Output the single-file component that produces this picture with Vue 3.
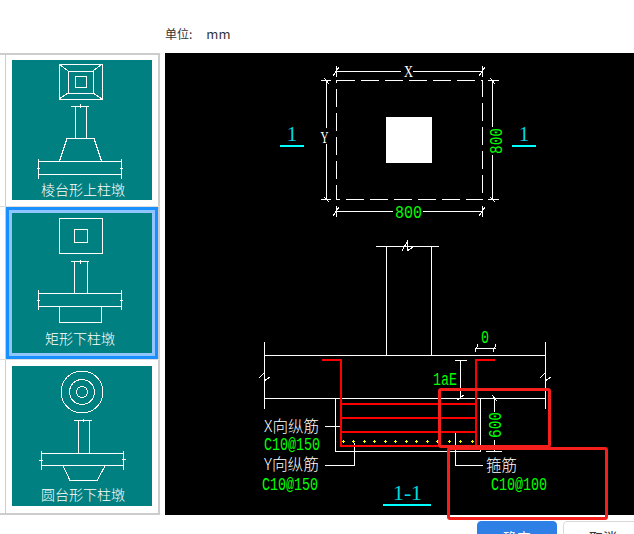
<script setup>
const diagonals = [
  [59, 64, 68, 71], [102, 64, 93, 71], [59, 99, 68, 93], [102, 99, 93, 93],
]
const dots = [343, 353, 364, 374, 385, 395, 406, 416, 427, 437, 449, 460, 472]
</script>

<template>
  <div class="dialog">
    <header class="unit-bar">
      <span class="unit-label">单位:</span>
      <span class="unit-value">mm</span>
    </header>

    <main class="body">
      <aside class="side">
        <ul class="list">
          <li class="row">
            <div class="cell">
              <div class="card">
                <svg class="thumb" width="140" height="120" viewBox="12 60 140 120" shape-rendering="crispEdges">
                  <g fill="none" stroke="#fff">
                    <rect x="59.5" y="64.5" width="43" height="35" />
                    <rect x="68.5" y="71.5" width="25" height="22" />
                    <rect x="75.5" y="76.5" width="11" height="10.5" />
                    <line v-for="(d, i) in diagonals" :key="i" :x1="d[0]" :y1="d[1]" :x2="d[2]" :y2="d[3]" />
                    <path d="M71 106.5H89M80 104V108M75.5 106V138.5M86.5 106V138.5M67 138.5H94M67 138.5L59.5 161M94 138.5L101.5 161M38.5 161.5H121.5M38.5 174.5H121.5M38.5 159V179M121.5 159V179M37 168.5H40M120 168.5H123" />
                  </g>
                </svg>
                <span class="caption cap-first">棱台形上柱墩</span>
              </div>
            </div>
          </li>
          <li class="row">
            <div class="cell selected">
              <div class="card">
                <svg class="thumb" width="140" height="120" viewBox="12 213 140 120" shape-rendering="crispEdges">
                  <g fill="none" stroke="#fff">
                    <rect x="59.5" y="218.5" width="43" height="35" />
                    <rect x="74.5" y="229.5" width="13" height="13" />
                    <path d="M71 261.5H89M80 260V264M74.5 261V293.5M87.5 261V293.5M38.5 293.5H121.5M38.5 306.5H121.5M38.5 290V310M121.5 290V310M37 300.5H40M120 300.5H123M59.5 306.5V322.5M101.5 306.5V322.5M59.5 322.5H101.5" />
                  </g>
                </svg>
                <span class="caption cap-mid">矩形下柱墩</span>
              </div>
            </div>
          </li>
          <li class="row">
            <div class="cell">
              <div class="card">
                <svg class="thumb" width="140" height="120" viewBox="12 366 140 120" shape-rendering="crispEdges">
                  <g fill="none" stroke="#fff">
                    <circle cx="82" cy="392" r="21" />
                    <circle cx="82" cy="392" r="12.5" />
                    <circle cx="82" cy="392" r="5.5" />
                    <path d="M74 420.5H92M83 419V422M78.5 420V453.5M89.5 420V453.5M41.5 453.5H123.5M41.5 465.5H123.5M41.5 451V470M123.5 451V470M39 460.5H43M122 459.5H126M63 466L70 480.5M105 466L97 480.5M70 480.5H97" />
                  </g>
                </svg>
                <span class="caption cap-last">圆台形下柱墩</span>
              </div>
            </div>
          </li>
        </ul>
      </aside>

      <section class="canvas">
        <svg class="drawing" width="469" height="462" viewBox="165 53 469 462" shape-rendering="crispEdges">
          <!-- plan view -->
          <g fill="none" stroke="#fff">
            <rect x="336.5" y="80.5" width="146" height="119" stroke-dasharray="18 6" />
            <path d="M336.5 66V77M482.5 66V77M336.5 71.5H401M413 71.5H482.5M333 76L339 67M479 76L485 67" />
            <path d="M326.5 80.5V128M326.5 144V199.5M321 80.5H331M321 199.5H331M324 78L329 84M324 197L329 202" />
            <path d="M492.5 80.5V127M492.5 155V199.5M488 80.5H499M488 199.5H499M490 78L495 84M490 197L495 202" />
            <path d="M336.5 206V217M482.5 206V217M336.5 211.5H393M423 211.5H482.5M333 216L339 207M479 216L485 207" />
          </g>
          <rect x="386" y="117" width="46" height="46" fill="#fff" />
          <rect x="280" y="145" width="24" height="2" fill="#00ffff" />
          <rect x="512" y="145" width="24" height="2" fill="#00ffff" />
          <text class="serif white" x="404" y="77" font-size="17" textLength="9" lengthAdjust="spacingAndGlyphs">X</text>
          <text class="serif white" x="320.5" y="143" font-size="17" textLength="8" lengthAdjust="spacingAndGlyphs">Y</text>
          <text class="serif cyan" x="292" y="141" text-anchor="middle" font-size="21">1</text>
          <text class="serif cyan" x="524" y="141" text-anchor="middle" font-size="21">1</text>
          <text class="cad green" x="395" y="218" font-size="19" textLength="27" lengthAdjust="spacingAndGlyphs">800</text>
          <text class="cad green" transform="translate(502 154) rotate(-90)" font-size="19" textLength="26" lengthAdjust="spacingAndGlyphs">800</text>

          <!-- section view -->
          <g fill="none" stroke="#fff">
            <path d="M376 246.5H439M386.5 246V355M431.5 246V355M402 251L407 242V251L413 247" />
            <path d="M264.5 342V409M545.5 342V409M264.5 355.5H545.5M264.5 398.5H545.5M259 378L264 373V381L270 377M540 378L545 373V381L551 377" />
            <path d="M335.5 398V451.5H480.5V398" />
            <path d="M475 348.5H496M478 344L475 352M496 344L493 352" />
            <path d="M460.5 360V398M455 360.5H467M457 400L464 395" />
            <path d="M494.5 398V412M494.5 440V451M486 451.5H502M492 395L497 401" />
            <path d="M325 426.5H341M325 465.5H354.5V443M455.5 433V465.5H483" />
          </g>
          <g fill="none" stroke="#ff0000" stroke-width="2">
            <path d="M322 360H341V446H476V360H495" />
            <path d="M341 404H476M341 418H476M341 432H476" />
          </g>
          <g stroke="#ffff00">
            <path v-for="x in dots" :key="x" :d="`M${x - 1} 441.5H${x + 2}M${x + 0.5} 440V443`" />
          </g>
          <text class="cad green" x="485" y="343" text-anchor="middle" font-size="18" textLength="8" lengthAdjust="spacingAndGlyphs">0</text>
          <text class="cad green" x="433" y="385" font-size="18" textLength="24" lengthAdjust="spacingAndGlyphs">1aE</text>
          <text class="cad green" transform="translate(501 438) rotate(-90)" font-size="19" textLength="26" lengthAdjust="spacingAndGlyphs">600</text>
          <text class="han white" x="264" y="432" font-size="16" textLength="55" lengthAdjust="spacingAndGlyphs">X向纵筋</text>
          <text class="cad green" x="264" y="450" font-size="19" textLength="56" lengthAdjust="spacingAndGlyphs">C10@150</text>
          <text class="han white" x="264" y="470" font-size="16" textLength="55" lengthAdjust="spacingAndGlyphs">Y向纵筋</text>
          <text class="cad green" x="262" y="490" font-size="19" textLength="56" lengthAdjust="spacingAndGlyphs">C10@150</text>
          <text class="han white" x="486" y="471" font-size="16" textLength="31" lengthAdjust="spacingAndGlyphs">箍筋</text>
          <text class="cad green" x="491" y="490" font-size="19" textLength="56" lengthAdjust="spacingAndGlyphs">C10@100</text>
          <text class="serif cyan" x="393" y="500" font-size="21" textLength="29" lengthAdjust="spacingAndGlyphs">1-1</text>
          <rect x="383" y="504" width="48" height="2" fill="#00ffff" />
        </svg>
        <div class="mark mark-a"></div>
        <div class="mark mark-b"></div>
      </section>
    </main>

    <footer class="actions">
      <button class="btn primary">确定</button>
      <button class="btn">取消</button>
    </footer>
  </div>
</template>

<style>
html, body { margin: 0; background: #fff; overflow: hidden; }
</style>

<style scoped>
.dialog {
  width: 634px;
  height: 534px;
  overflow: hidden;
  display: flex;
  flex-direction: column;
  background: #fff;
  font-family: "Noto Sans CJK SC", "Liberation Sans", sans-serif;
}
.unit-bar {
  height: 53px;
  flex: none;
  box-sizing: border-box;
  padding: 25px 0 0 165px;
  display: flex;
  gap: 14px;
  font-size: 12px;
  line-height: 18px;
  color: #333;
}
.unit-value { font-size: 13px; }
.body {
  height: 462px;
  flex: none;
  display: flex;
  gap: 5px;
}
.side {
  width: 160px;
  flex: none;
  box-sizing: border-box;
  height: 462px;
  border-top: 2px solid #ccc;
  border-right: 2px solid #ccc;
}
.list {
  list-style: none;
  margin: 0;
  padding: 0;
  border-bottom: 2px solid #ccc;
  margin-right: -2px;
  width: 160px;
}
.row {
  padding-left: 5px;
  border-bottom: 1px solid #ddd;
}
.row:last-child { border-bottom: none; }
.cell {
  box-sizing: border-box;
  border-left: 1px solid #ccc;
  width: 153px;
  padding: 5px 6px 6px 6px;
}
.row:nth-child(3) .cell { padding: 6px 6px 7px 6px; }
.cell.selected {
  position: relative;
  padding: 6px 0;
}
.selected .card { margin: 0 6px; }
.selected::before {
  content: "";
  position: absolute;
  left: 0;
  right: 0;
  top: 0;
  bottom: 0;
  border: 3px solid #1890ff;
  box-shadow: inset 0 0 0 3px #91c5ff;
}
.card {
  width: 140px;
  height: 140px;
  background: #008080;
  display: flex;
  flex-direction: column;
  align-items: center;
}
.thumb { display: block; flex: none; }
.caption {
  color: #fff;
  font-size: 14px;
  font-weight: 300;
  line-height: 20px;
  margin-left: 2px;
}
.cap-first { margin-top: -1px; }
.cap-mid {
  margin-left: -4px;
  margin-top: -5px;
}
.cap-last { margin-top: -2px; }
.canvas {
  position: relative;
  width: 469px;
  height: 462px;
  flex: none;
  background: #000;
}
.drawing { display: block; }
.cad { font-family: "Liberation Mono", monospace; }
.serif { font-family: "Liberation Serif", serif; }
.han { font-family: "Noto Sans CJK SC", "Liberation Mono", sans-serif; font-weight: 300; }
.white { fill: #fff; }
.green { fill: #00ff00; }
.cyan { fill: #00d8e0; }
.mark {
  position: absolute;
  box-sizing: border-box;
  border: 3px solid #f5201c;
  border-radius: 3px;
}
.mark-a {
  left: 273px;
  top: 335px;
  width: 113px;
  height: 60px;
}
.mark-b {
  left: 282px;
  top: 394px;
  width: 161px;
  height: 73px;
}
.actions {
  flex: none;
  display: flex;
  justify-content: flex-start;
  gap: 6px;
  padding: 6px 0 0 477px;
}
.btn {
  flex: none;
  width: 80px;
  height: 32px;
  box-sizing: border-box;
  border: 1px solid #d9d9d9;
  border-radius: 4px;
  background: #fff;
  color: #333;
  font-family: "Noto Sans CJK SC", sans-serif;
  font-size: 14px;
  padding: 0;
}
.primary {
  background: #2f80e6;
  border-color: #2f80e6;
  color: #fff;
}
</style>
